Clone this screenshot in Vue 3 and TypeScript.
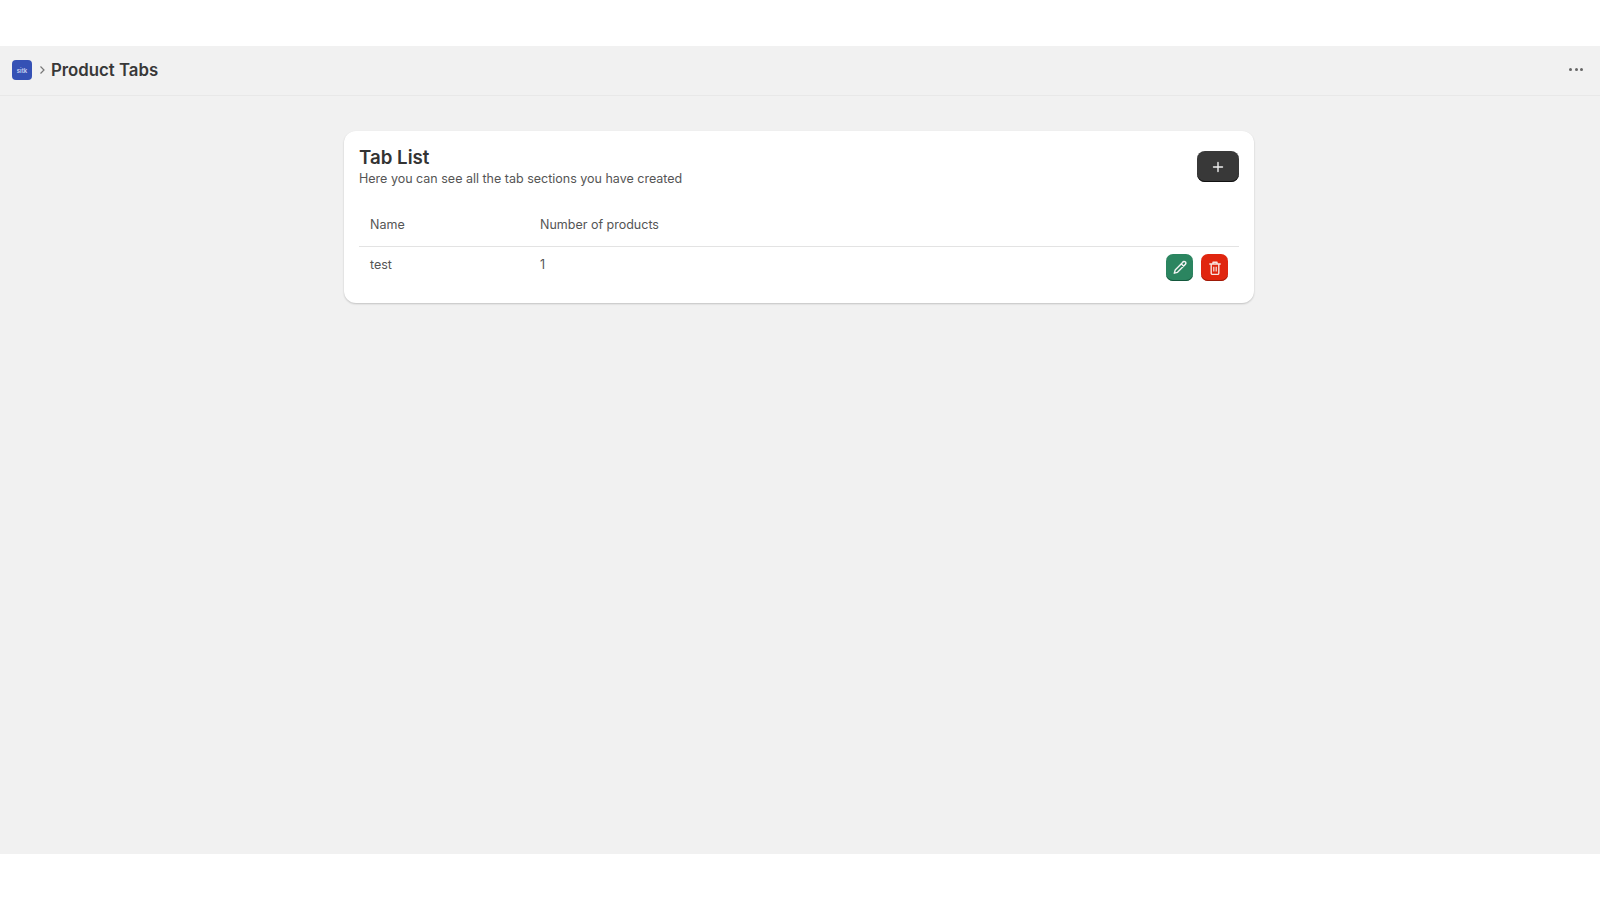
<template>
  <div class="page">
    <header class="topbar">
      <div class="crumbs">
        <span class="app-logo">sitk</span>
        <svg class="chevron" viewBox="0 0 8 10" width="8" height="10" aria-hidden="true">
          <path d="M2.5 1.5 6 5 2.5 8.5" fill="none" stroke="#777" stroke-width="1.2" />
        </svg>
        <h1 class="app-title">Product Tabs</h1>
      </div>
      <button class="more" type="button" aria-label="More actions">
        <i /><i /><i />
      </button>
    </header>

    <main class="content">
      <section class="card">
        <div class="card-head">
          <div>
            <h2>Tab List</h2>
            <p>Here you can see all the tab sections you have created</p>
          </div>
          <button class="btn btn-add" type="button" aria-label="Add">
            <svg viewBox="0 0 12 12" width="12" height="12" aria-hidden="true">
              <path d="M6 1.5v9M1.5 6h9" stroke="#eee" stroke-width="1.4" stroke-linecap="round" />
            </svg>
          </button>
        </div>

        <table class="tabs-table">
          <thead>
            <tr>
              <th class="col-name">Name</th>
              <th>Number of products</th>
              <th />
            </tr>
          </thead>
          <tbody>
            <tr v-for="tab in tabs" :key="tab.name">
              <td>{{ tab.name }}</td>
              <td>{{ tab.products }}</td>
              <td>
                <div class="actions">
                  <button class="btn btn-icon btn-edit" type="button" aria-label="Edit">
                    <svg viewBox="0 0 16 16" width="16" height="16" aria-hidden="true">
                      <path
                        d="M10.6 2.4a1.7 1.7 0 0 1 3 1.6l-.4.6-7.7 7.7-3.2.9.9-3.2 7.4-7.6ZM9.4 3.9l2.7 2.7"
                        fill="none"
                        stroke="#f2f2f2"
                        stroke-width="1.4"
                        stroke-linejoin="round"
                      />
                    </svg>
                  </button>
                  <button class="btn btn-icon btn-delete" type="button" aria-label="Delete">
                    <svg viewBox="0 0 16 16" width="16" height="16" aria-hidden="true">
                      <path
                        d="M2.8 4h10.4M6 4V2.2h4V4M4.2 4v9.2a1.2 1.2 0 0 0 1.2 1.2h5.2a1.2 1.2 0 0 0 1.2-1.2V4"
                        fill="none"
                        stroke="#f7e6e2"
                        stroke-width="1.4"
                        stroke-linecap="round"
                        stroke-linejoin="round"
                      />
                      <path d="M6.8 6.8v4.8M9.2 6.8v4.8" stroke="#f7e6e2" stroke-width="1.2" />
                    </svg>
                  </button>
                </div>
              </td>
            </tr>
          </tbody>
        </table>
      </section>
    </main>
  </div>
</template>

<script setup lang="ts">
interface ProductTab {
  name: string
  products: number
}

const tabs: ProductTab[] = [{ name: 'test', products: 1 }]
</script>

<style scoped>
.page {
  height: 900px;
  padding: 46px 0;
  box-sizing: border-box;
  font-family: Inter, "Liberation Sans", sans-serif;
  color: #303030;
}

.topbar {
  height: 50px;
  box-sizing: border-box;
  padding: 0 10px 1px 12px;
  display: flex;
  align-items: center;
  justify-content: space-between;
  background: #f1f1f1;
  border-bottom: 1px solid #e8e8e8;
}

.crumbs {
  display: flex;
  align-items: center;
}

.app-logo {
  width: 20px;
  height: 20px;
  border-radius: 4px;
  background: #3551b5;
  color: #cfd6f2;
  font-size: 6px;
  font-weight: 600;
  display: flex;
  align-items: center;
  justify-content: center;
}

.chevron {
  margin: 0 5px 0 6px;
}

.app-title {
  margin: 0;
  font-size: 16.8px;
  line-height: 24px;
  font-weight: 600;
  color: #383838;
}

.more {
  width: 28px;
  height: 28px;
  margin-top: -1px;
  padding: 0;
  border: 0;
  background: none;
  display: flex;
  align-items: center;
  justify-content: center;
  gap: 2.5px;
}

.more i {
  width: 3px;
  height: 3px;
  border-radius: 50%;
  background: #666;
}

.content {
  height: 758px;
  padding: 35px 2px 0 0;
  box-sizing: border-box;
  background: #f1f1f1;
}

.card {
  width: 910px;
  height: 172px;
  margin: 0 auto;
  box-sizing: border-box;
  padding: 15px;
  background: #fff;
  border-radius: 12px;
  box-shadow: 0 1px 2px rgba(0, 0, 0, 0.2);
}

.card-head {
  display: flex;
  justify-content: space-between;
  align-items: flex-start;
  height: 60px;
}

.card-head h2 {
  margin: 0;
  font-size: 18.7px;
  line-height: 24px;
  font-weight: 600;
  color: #333;
}

.card-head p {
  margin: 0;
  font-size: 12.5px;
  line-height: 18px;
  color: #555;
}

.btn {
  border: 0;
  padding: 0;
  display: flex;
  align-items: center;
  justify-content: center;
}

.btn-add {
  width: 42px;
  height: 31px;
  margin-top: 5px;
  border-radius: 8px;
  background: #383838;
  box-shadow: inset 0 -1px 0 #111;
}

.tabs-table {
  width: 100%;
  border-collapse: collapse;
  font-size: 12.5px;
  line-height: 18px;
  color: #555;
}

.tabs-table th {
  height: 37px;
  padding: 0 0 3px 11px;
  text-align: left;
  font-weight: 400;
  border-bottom: 1px solid #e3e3e3;
}

.tabs-table .col-name {
  width: 159px;
}

.tabs-table td {
  padding: 9px 0 0 11px;
  vertical-align: top;
}

.actions {
  display: flex;
  justify-content: flex-end;
  gap: 8px;
  padding-right: 11px;
  margin-top: -2px;
}

.btn-icon {
  width: 27px;
  height: 27px;
  border-radius: 7px;
}

.btn-edit {
  background: #2b8560;
  box-shadow: inset 0 -1px 0 #14573c;
}

.btn-delete {
  background: #e0260f;
  box-shadow: inset 0 -1px 0 #9c1a08;
}
</style>
